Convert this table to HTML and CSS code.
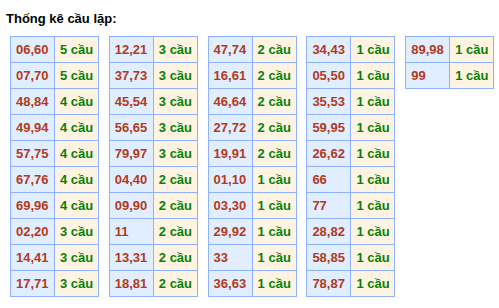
FILE: index.html
```html
<!DOCTYPE html>
<html lang="vi">
<head>
<meta charset="utf-8">
<link rel="stylesheet" href="styles.css">
</head>
<body>
<div class="wrap">
  <h3 class="title">Thống kê cầu lặp:</h3>
  <div class="tables">
    <div class="tbl">
      <div class="num">06,60</div><div class="cnt">5 cầu</div>
      <div class="num">07,70</div><div class="cnt">5 cầu</div>
      <div class="num">48,84</div><div class="cnt">4 cầu</div>
      <div class="num">49,94</div><div class="cnt">4 cầu</div>
      <div class="num">57,75</div><div class="cnt">4 cầu</div>
      <div class="num">67,76</div><div class="cnt">4 cầu</div>
      <div class="num">69,96</div><div class="cnt">4 cầu</div>
      <div class="num">02,20</div><div class="cnt">3 cầu</div>
      <div class="num">14,41</div><div class="cnt">3 cầu</div>
      <div class="num">17,71</div><div class="cnt">3 cầu</div>
    </div>
    <div class="tbl">
      <div class="num">12,21</div><div class="cnt">3 cầu</div>
      <div class="num">37,73</div><div class="cnt">3 cầu</div>
      <div class="num">45,54</div><div class="cnt">3 cầu</div>
      <div class="num">56,65</div><div class="cnt">3 cầu</div>
      <div class="num">79,97</div><div class="cnt">3 cầu</div>
      <div class="num">04,40</div><div class="cnt">2 cầu</div>
      <div class="num">09,90</div><div class="cnt">2 cầu</div>
      <div class="num">11</div><div class="cnt">2 cầu</div>
      <div class="num">13,31</div><div class="cnt">2 cầu</div>
      <div class="num">18,81</div><div class="cnt">2 cầu</div>
    </div>
    <div class="tbl">
      <div class="num">47,74</div><div class="cnt">2 cầu</div>
      <div class="num">16,61</div><div class="cnt">2 cầu</div>
      <div class="num">46,64</div><div class="cnt">2 cầu</div>
      <div class="num">27,72</div><div class="cnt">2 cầu</div>
      <div class="num">19,91</div><div class="cnt">2 cầu</div>
      <div class="num">01,10</div><div class="cnt">1 cầu</div>
      <div class="num">03,30</div><div class="cnt">1 cầu</div>
      <div class="num">29,92</div><div class="cnt">1 cầu</div>
      <div class="num">33</div><div class="cnt">1 cầu</div>
      <div class="num">36,63</div><div class="cnt">1 cầu</div>
    </div>
    <div class="tbl">
      <div class="num">34,43</div><div class="cnt">1 cầu</div>
      <div class="num">05,50</div><div class="cnt">1 cầu</div>
      <div class="num">35,53</div><div class="cnt">1 cầu</div>
      <div class="num">59,95</div><div class="cnt">1 cầu</div>
      <div class="num">26,62</div><div class="cnt">1 cầu</div>
      <div class="num">66</div><div class="cnt">1 cầu</div>
      <div class="num">77</div><div class="cnt">1 cầu</div>
      <div class="num">28,82</div><div class="cnt">1 cầu</div>
      <div class="num">58,85</div><div class="cnt">1 cầu</div>
      <div class="num">78,87</div><div class="cnt">1 cầu</div>
    </div>
    <div class="tbl">
      <div class="num">89,98</div><div class="cnt">1 cầu</div>
      <div class="num">99</div><div class="cnt">1 cầu</div>
    </div>
  </div>
</div>
</body>
</html>
```
FILE: styles.css
```css
html, body {
  margin: 0;
  padding: 0;
  background: #ffffff;
}
body {
  font-family: "Liberation Sans", Arial, sans-serif;
  font-size: 13px;
}
.wrap {
  padding: 10px 0 0 6px;
}
.title {
  margin: 0;
  font-size: 13px;
  font-weight: bold;
  line-height: 18px;
  color: #000000;
}
.tables {
  display: flex;
  align-items: flex-start;
  gap: 9.8px;
  margin: 8px 0 0 4px;
}
.tbl {
  display: grid;
  grid-template-columns: 44px 44px;
  border-top: 1px solid #8fb2ff;
  border-left: 1px solid #8fb2ff;
}
.tbl > div {
  box-sizing: border-box;
  height: 26px;
  line-height: 25px;
  padding-left: 5px;
  border-right: 1px solid #8fb2ff;
  border-bottom: 1px solid #8fb2ff;
  font-weight: bold;
  white-space: nowrap;
}
.num {
  background: #e1eeff;
  color: #b23a1c;
}
.cnt {
  background: #fff4e1;
  color: #078007;
}
```
